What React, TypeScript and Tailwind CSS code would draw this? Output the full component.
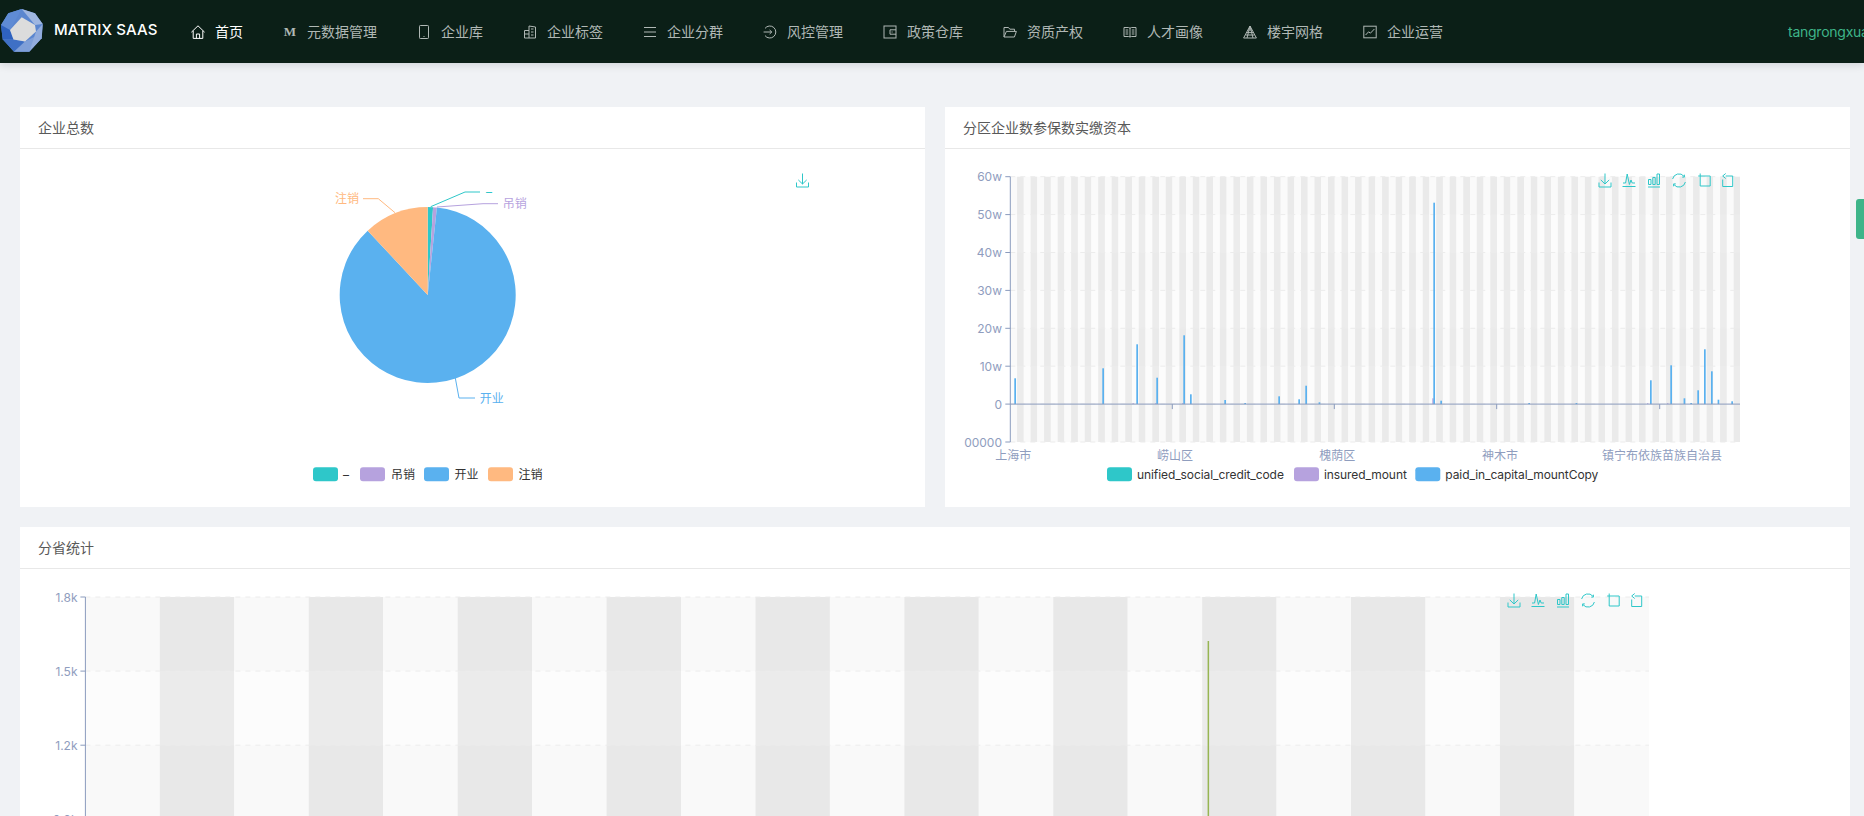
import React from "react";

const TEAL = "#2ec7c9";
const PURPLE = "#b6a2de";
const BLUE = "#5ab1ef";
const ORANGE = "#ffb980";
const AXIS = "#8a9bbd";
const AXIS_TEXT = "#8f9dbe";

function NavIcon({ children }: { children: React.ReactNode }) {
  return (
    <svg width="14" height="14" viewBox="0 0 14 14" fill="none" stroke="currentColor" strokeWidth="1" className="shrink-0">
      {children}
    </svg>
  );
}

const navItems: { label: string; active?: boolean; icon: React.ReactNode }[] = [
  {
    label: "首页",
    active: true,
    icon: (
      <NavIcon>
        <path d="M0.4 7.2 L7 0.8 L13.6 7.2 M2.2 5.8 V13.4 H11.8 V5.8 M5.4 13.4 V9 H8.6 V13.4" />
      </NavIcon>
    ),
  },
  {
    label: "元数据管理",
    icon: <span className="w-[14px] shrink-0 text-center font-['Liberation_Serif',serif] text-[13px] font-bold leading-[14px]">M</span>,
  },
  {
    label: "企业库",
    icon: (
      <NavIcon>
        <rect x="2.5" y="0.5" width="9" height="13" rx="0.8" />
        <path d="M6.5 11.5 H7.5" />
      </NavIcon>
    ),
  },
  {
    label: "企业标签",
    icon: (
      <NavIcon>
        <path d="M1.5 13 V5.5 H6 V13 H12.5 V2 L6 1 V5.5 M1.5 9 H6 M8 4 H10.5 M8 7 H10.5 M8 10 H10.5 M1.5 13 H6" />
      </NavIcon>
    ),
  },
  {
    label: "企业分群",
    icon: (
      <NavIcon>
        <path d="M1 2.5 H13 M1 7 H13 M1 11.5 H13" />
      </NavIcon>
    ),
  },
  {
    label: "风控管理",
    icon: (
      <NavIcon>
        <path d="M2 3.4 A6 6 0 1 1 2 10.6 M0.6 7 H8.6 M6.6 5 L8.8 7 L6.6 9" />
      </NavIcon>
    ),
  },
  {
    label: "政策仓库",
    icon: (
      <NavIcon>
        <rect x="1" y="1" width="12" height="12" />
        <path d="M13 4.8 H7 V9.2 H13 M8.6 7 H9.6" />
      </NavIcon>
    ),
  },
  {
    label: "资质产权",
    icon: (
      <NavIcon>
        <path d="M1 12 V2.5 H5.5 L6.8 4.2 H11.5 V6.4 M1 12 L3.4 6.4 H13.4 L11.4 12 H1" />
      </NavIcon>
    ),
  },
  {
    label: "人才画像",
    icon: (
      <NavIcon>
        <path d="M7 3 V12 M1 2.5 H5.5 L7 3.2 L8.5 2.5 H13 V11.5 H8.5 L7 12 L5.5 11.5 H1 V2.5 M2.6 5 H5.2 M2.6 7 H5.2 M2.6 9 H5.2 M8.8 5 H11.4 M8.8 7 H11.4 M8.8 9 H11.4" />
      </NavIcon>
    ),
  },
  {
    label: "楼宇网格",
    icon: (
      <NavIcon>
        <path d="M7 1 L13.4 13 H0.6 L7 1 M5.2 5 H8.8 M3.8 7.6 H10.2 M2.6 10 H11.4 M7 1 L4 13 M7 1 L10 13" />
      </NavIcon>
    ),
  },
  {
    label: "企业运营",
    icon: (
      <NavIcon>
        <rect x="0.8" y="1.2" width="12.4" height="11.6" />
        <path d="M2.6 10 L5.6 6.8 L7.4 8.2 L11.4 4" />
      </NavIcon>
    ),
  },
];

function Logo() {
  return (
    <svg width="44" height="63" viewBox="0 0 44 63" className="shrink-0">
      <polygon points="21.7,9 35,13.3 42.7,24 41.7,38.3 29.3,51.7 14,51.7 2.7,39.3 1,25 8.3,13.3" fill="#5b86cf" />
      <polygon points="21.7,9 8.3,13.3 1,25 10,30" fill="#5f8bd4" />
      <polygon points="1,25 10,30 13.5,39.5 2.7,39.3" fill="#2f62bf" />
      <polygon points="2.7,39.3 14,51.7 25,41.5 13.5,39.5" fill="#3f70c5" />
      <polygon points="14,51.7 29.3,51.7 36,36 25,41.5" fill="#7f9fd8" />
      <polygon points="36,31.5 42.7,24 41.7,38.3 29.3,51.7" fill="#92acdd" />
      <polygon points="21.7,9 35,13.3 42.7,24 35,25" fill="#9fb6e0" />
      <polygon points="21.7,17.3 35,25 36,31.5 25,41.5 13.5,39.5 10,30" fill="#dcdcdc" />
    </svg>
  );
}

function Header() {
  return (
    <header className="relative z-10 flex h-[63px] shrink-0 items-center overflow-hidden bg-[#0b1f17] shadow-[0_2px_8px_rgba(0,21,41,0.14)]">
      <div className="flex w-[171px] shrink-0 items-center">
        <Logo />
        <span className="-mt-0.5 ml-[10px] whitespace-nowrap text-[15px] font-medium tracking-[0.15px] text-white">MATRIX SAAS</span>
      </div>
      <nav className="flex shrink-0 items-center">
        {navItems.map((item) => (
          <div
            key={item.label}
            className={
              item.active
                ? "flex items-center gap-[10px] whitespace-nowrap px-5 text-sm text-white"
                : "flex items-center gap-[10px] whitespace-nowrap px-5 text-sm text-[#b0b8b5]"
            }
          >
            {item.icon}
            <span>{item.label}</span>
          </div>
        ))}
      </nav>
      <span className="ml-[325px] shrink-0 whitespace-nowrap text-sm tracking-[-0.25px] text-[#3eb489]">tangrongxuan</span>
    </header>
  );
}

/* ---------- chart toolbox icons, drawn around a local origin ---------- */
function ToolIcon({ x, y, children }: { x: number; y: number; children: React.ReactNode }) {
  return (
    <g transform={`translate(${x} ${y})`} fill="none" stroke={TEAL} strokeWidth="1">
      {children}
    </g>
  );
}

const IconDownload = (p: { x: number; y: number }) => (
  <ToolIcon {...p}>
    <path d="M0 -7 V3.5 M-4.2 -0.6 L0 3.5 L4.2 -0.6 M-6 2 V6.5 H6 V2" />
  </ToolIcon>
);

function Toolbox({ xs, y }: { xs: number[]; y: number }) {
  return (
    <g>
      <IconDownload x={xs[0]} y={y} />
      <ToolIcon x={xs[1]} y={y}>
        <path d="M-6.5 6 H6.5 M-6 2.5 H-3.4 L-1.8 -6.5 L0.4 4 L2 -0.5 L3.2 2.5 H6" />
      </ToolIcon>
      <ToolIcon x={xs[2]} y={y}>
        <path d="M-6 6.5 H6 M-5.5 -1 H-3 V4 H-5.5 Z M-1.2 -3 H1.2 V4 H-1.2 Z M3 -6.5 H5.5 V4 H3 Z" />
      </ToolIcon>
      <ToolIcon x={xs[3]} y={y}>
        <path d="M-6.4 -1.5 A6.5 6.5 0 0 1 5 -4.2 M6.4 1.5 A6.5 6.5 0 0 1 -5 4.2 M5.4 -5.8 V-3.4 H3.2 M-5.4 5.8 V3.4 H-3.2" />
      </ToolIcon>
      <ToolIcon x={xs[4]} y={y}>
        <path d="M-4.5 -7 V5.5 H5.5 V-4.5 H-6.5" />
      </ToolIcon>
      <ToolIcon x={xs[5]} y={y}>
        <path d="M-2 -4.5 H5 V6 H-5 V-1 M-2 -7 L-5 -4.5 L-2 -2" />
      </ToolIcon>
    </g>
  );
}

/* ---------- plot background ---------- */
function PlotBackground({
  x,
  width,
  top,
  rowH,
  rows,
  stripe,
  count,
  lines,
  dark,
  band,
}: {
  x: number;
  width: number;
  top: number;
  rowH: number;
  rows: number;
  stripe: number;
  count: number;
  lines: number;
  dark: string;
  band: string;
}) {
  const height = rowH * rows;
  return (
    <g>
      {Array.from({ length: count }, (_, i) => (
        <rect
          key={i}
          x={x + i * stripe}
          y={top}
          width={Math.min(stripe, x + width - (x + i * stripe))}
          height={height}
          fill={i % 2 === 0 ? "#fcfcfc" : dark}
        />
      ))}
      {Array.from({ length: rows }, (_, i) =>
        i % 2 === 0 ? <rect key={i} x={x} y={top + i * rowH} width={width} height={rowH} fill={band} /> : null,
      )}
      {Array.from({ length: lines }, (_, i) => (
        <line key={i} x1={x} x2={x + width} y1={top + i * rowH} y2={top + i * rowH} stroke="#ececec" strokeDasharray="5 5" />
      ))}
    </g>
  );
}

function YLabel({ x, y, children }: { x: number; y: number; children: React.ReactNode }) {
  return (
    <text x={x} y={y} textAnchor="end" dominantBaseline="central" fontSize="12" fill={AXIS_TEXT}>
      {children}
    </text>
  );
}

function LegendItem({ x, textX, color, label }: { x: number; textX: number; color: string; label: string }) {
  return (
    <g>
      <rect x={x} y={467.3} width={25} height={14} rx={3} fill={color} />
      <text x={textX} y={474.7} dominantBaseline="central" fontSize="12" letterSpacing="-0.08" fill="#333333">
        {label}
      </text>
    </g>
  );
}

/* ---------- pie ---------- */
function slice(cx: number, cy: number, r: number, from: number, to: number) {
  const pt = (a: number) => {
    const t = (a * Math.PI) / 180;
    return `${(cx + r * Math.sin(t)).toFixed(2)} ${(cy - r * Math.cos(t)).toFixed(2)}`;
  };
  const large = to - from > 180 ? 1 : 0;
  return `M${cx} ${cy} L${pt(from)} A${r} ${r} 0 ${large} 1 ${pt(to)} Z`;
}

function PieChart() {
  const cx = 427.7;
  const cy = 295;
  const r = 88;
  return (
    <svg width="905" height="358" viewBox="20 149 905 358" className="block">
      <path d={slice(cx, cy, r, 0, 3.5)} fill={TEAL} />
      <path d={slice(cx, cy, r, 3.5, 6)} fill={PURPLE} />
      <path d={slice(cx, cy, r, 6, 317)} fill={BLUE} />
      <path d={slice(cx, cy, r, 317, 360)} fill={ORANGE} />

      <polyline points="430.7,206.7 465,192 480,192" fill="none" stroke={TEAL} />
      <polyline points="437,207 483,203.7 498,203.7" fill="none" stroke={PURPLE} />
      <polyline points="455.3,378 459,398 475,398" fill="none" stroke={BLUE} />
      <polyline points="395,212.7 378.3,198.7 363,198.7" fill="none" stroke={ORANGE} />

      <text x="486" y="191" dominantBaseline="central" fontSize="12" fill={TEAL}>–</text>
      <text x="502.7" y="203.7" dominantBaseline="central" fontSize="12" fill={PURPLE}>吊销</text>
      <text x="479.7" y="398.5" dominantBaseline="central" fontSize="12" fill={BLUE}>开业</text>
      <text x="335" y="198.7" dominantBaseline="central" fontSize="12" fill={ORANGE}>注销</text>

      <IconDownload x={802.5} y={180.5} />

      <LegendItem x={313} textX={343} color={TEAL} label="–" />
      <LegendItem x={360} textX={391} color={PURPLE} label="吊销" />
      <LegendItem x={424} textX={454.5} color={BLUE} label="开业" />
      <LegendItem x={488} textX={518.5} color={ORANGE} label="注销" />
    </svg>
  );
}

/* ---------- district bar chart ---------- */
const blueBars: [number, number][] = [
  [1015, 378.3], [1103, 368.3], [1137, 344.3], [1157, 377.7], [1184, 335.3], [1190.7, 394.3],
  [1225, 400], [1245, 403], [1279, 396.3], [1299, 399.3], [1306, 385.7], [1319.3, 402.3],
  [1434, 202.7], [1441, 400.7], [1529, 403], [1576.3, 403], [1650.7, 380.3], [1671, 365.3],
  [1684.3, 398.3], [1691, 403], [1698, 390.3], [1704.7, 349.3], [1711.7, 371.3], [1718.3, 399.7], [1732, 401.3],
];
const purpleBars: [number, number][] = [
  [1132.5, 403.3], [1155, 403.3], [1182, 403.3], [1432.3, 398.3], [1647, 403.3], [1667, 403.3],
];

function BarChart() {
  const axisX = 1010.3;
  const top = 176.7;
  const rowH = 37.9;
  const zero = top + rowH * 6;
  const yLabels = ["60w", "50w", "40w", "30w", "20w", "10w", "0", "00000"];
  return (
    <svg width="905" height="358" viewBox="945 149 905 358" className="block">
      <PlotBackground x={axisX} width={729.7} top={top} rowH={rowH} rows={7} stripe={6.76} count={108} lines={8} dark="#ececec" band="rgba(0,0,0,0.006)" />
      {purpleBars.map(([x, y]) => (
        <rect key={x} x={x} y={y} width={1.4} height={zero - y} fill={PURPLE} />
      ))}
      {blueBars.map(([x, y]) => (
        <rect key={x} x={x - 0.7} y={y} width={1.7} height={zero - y} fill={BLUE} />
      ))}
      <line x1={axisX} x2={axisX} y1={top} y2={top + rowH * 7} stroke={AXIS} />
      <line x1={axisX} x2={1740} y1={zero} y2={zero} stroke={AXIS} />
      {yLabels.map((label, i) => (
        <g key={label}>
          <line x1={axisX - 5} x2={axisX} y1={top + i * rowH} y2={top + i * rowH} stroke={AXIS} />
          <YLabel x={1002} y={top + i * rowH}>{label}</YLabel>
        </g>
      ))}
      {[1172.3, 1334.3, 1496.7, 1659.7].map((x) => (
        <line key={x} x1={x} x2={x} y1={zero} y2={zero + 5} stroke={AXIS} />
      ))}
      {[
        [1013.3, "上海市"],
        [1175, "崂山区"],
        [1337.3, "槐荫区"],
        [1500, "神木市"],
        [1662, "镇宁布依族苗族自治县"],
      ].map(([x, label]) => (
        <text key={label as string} x={x as number} y={455.7} textAnchor="middle" dominantBaseline="central" fontSize="12" fill={AXIS_TEXT}>
          {label}
        </text>
      ))}
      <Toolbox xs={[1605, 1629, 1654, 1679, 1704.7, 1727.7]} y={180.5} />
      <LegendItem x={1107} textX={1137} color={TEAL} label="unified_social_credit_code" />
      <LegendItem x={1294} textX={1324} color={PURPLE} label="insured_mount" />
      <LegendItem x={1415.3} textX={1445.3} color={BLUE} label="paid_in_capital_mountCopy" />
    </svg>
  );
}

/* ---------- province chart ---------- */
function ProvinceChart() {
  const axisX = 85.4;
  const top = 597;
  const rowH = 74.1;
  return (
    <svg width="1830" height="300" viewBox="20 569 1830 300" className="block">
      <PlotBackground x={axisX} width={1563.6} top={top} rowH={rowH} rows={4} stripe={74.45} count={21} lines={4} dark="#ebebeb" band="rgba(0,0,0,0.012)" />
      <line x1={axisX} x2={axisX} y1={top} y2={869} stroke={AXIS} />
      {["1.8k", "1.5k", "1.2k", "0.9k"].map((label, i) => (
        <g key={label}>
          <line x1={axisX - 5} x2={axisX} y1={top + i * rowH} y2={top + i * rowH} stroke={AXIS} />
          <YLabel x={77.5} y={top + i * rowH}>{label}</YLabel>
        </g>
      ))}
      <rect x={1207.6} y={641} width={1.5} height={228} fill="#97b552" />
      <Toolbox xs={[1514, 1538, 1563, 1588, 1613.7, 1636.7]} y={600.5} />
    </svg>
  );
}

function Card({ title, children }: { title: string; children: React.ReactNode }) {
  return (
    <section className="bg-white">
      <div className="flex h-[42px] items-center border-b border-[#e8e8e8] px-[18px] text-sm text-[#595959]">{title}</div>
      {children}
    </section>
  );
}

export default function App() {
  return (
    <div className="relative h-screen overflow-hidden bg-[#f0f2f5] font-[Inter,'Noto_Sans_CJK_SC',sans-serif]">
      <Header />
      <main className="grid grid-cols-2 gap-5 pb-5 pl-5 pr-[14px] pt-11">
        <Card title="企业总数">
          <PieChart />
        </Card>
        <Card title="分区企业数参保数实缴资本">
          <BarChart />
        </Card>
        <div className="col-span-2">
          <Card title="分省统计">
            <ProvinceChart />
          </Card>
        </div>
      </main>
      <div className="absolute right-0 top-[199px] h-10 w-2 rounded-l-[3px] bg-[#3eb489]" />
    </div>
  );
}
